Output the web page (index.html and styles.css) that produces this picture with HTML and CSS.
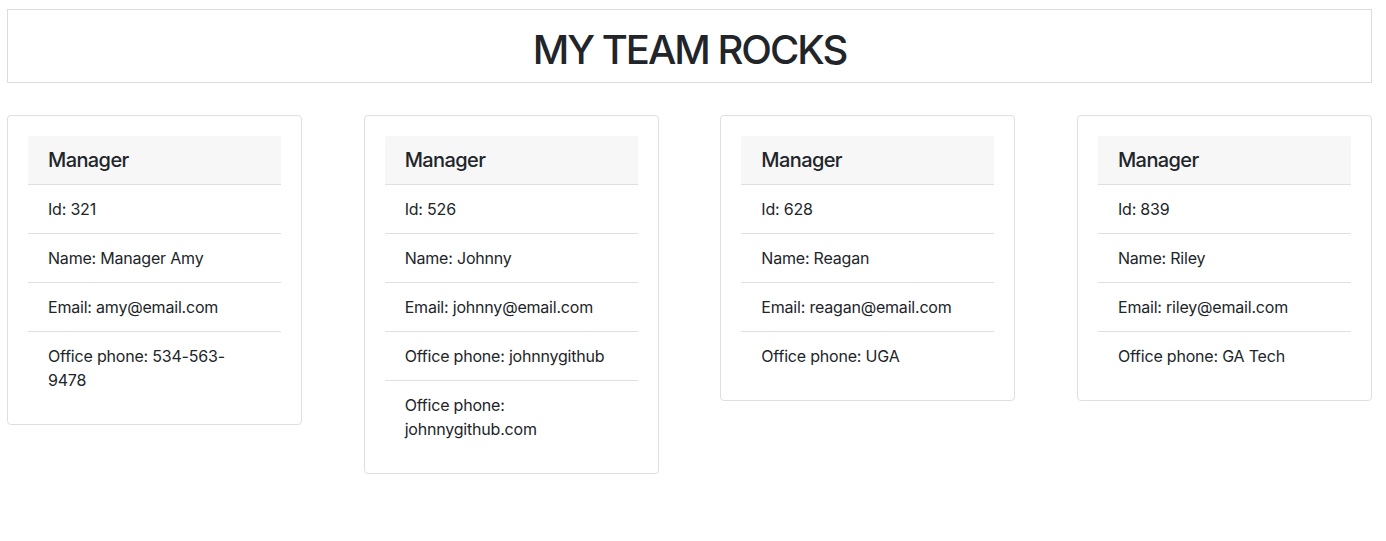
FILE: index.html
```html
<!DOCTYPE html>
<html lang="en">
<head>
<meta charset="utf-8">
<title>My Team</title>
<link rel="stylesheet" href="styles.css">
</head>
<body>
<header class="banner">
  <h1 class="banner-title">MY TEAM ROCKS</h1>
</header>
<main class="team">
  <div class="card">
    <div class="card-body">
      <div class="card-header">Manager</div>
      <ul class="list">
        <li class="list-item">Id: 321</li>
        <li class="list-item">Name: Manager Amy</li>
        <li class="list-item">Email: amy@email.com</li>
        <li class="list-item">Office phone: 534-563-9478</li>
      </ul>
    </div>
  </div>
  <div class="card">
    <div class="card-body">
      <div class="card-header">Manager</div>
      <ul class="list">
        <li class="list-item">Id: 526</li>
        <li class="list-item">Name: Johnny</li>
        <li class="list-item">Email: johnny@email.com</li>
        <li class="list-item">Office phone: johnnygithub</li>
        <li class="list-item">Office phone: johnnygithub.com</li>
      </ul>
    </div>
  </div>
  <div class="card">
    <div class="card-body">
      <div class="card-header">Manager</div>
      <ul class="list">
        <li class="list-item">Id: 628</li>
        <li class="list-item">Name: Reagan</li>
        <li class="list-item">Email: reagan@email.com</li>
        <li class="list-item">Office phone: UGA</li>
      </ul>
    </div>
  </div>
  <div class="card">
    <div class="card-body">
      <div class="card-header">Manager</div>
      <ul class="list">
        <li class="list-item">Id: 839</li>
        <li class="list-item">Name: Riley</li>
        <li class="list-item">Email: riley@email.com</li>
        <li class="list-item">Office phone: GA Tech</li>
      </ul>
    </div>
  </div>
</main>
</body>
</html>
```
FILE: styles.css
```css
* { box-sizing: border-box; }

body {
  margin: 0;
  padding: 9px 14px 0 7px;
  font-family: Inter, "Liberation Sans", sans-serif;
  font-size: 16px;
  line-height: 1.5;
  color: #212529;
  background: #fff;
}

.banner {
  border: 1px solid #dcdcdc;
  padding: 16px 0 8px;
  text-align: center;
}

.banner-title {
  margin: 0;
  font-size: 40px;
  font-weight: 500;
  line-height: 1.2;
  letter-spacing: -2px;
}

.team {
  display: flex;
  justify-content: space-between;
  align-items: flex-start;
  margin-top: 32px;
}

.card {
  width: 295px;
  border: 1px solid #dfdfdf;
  border-radius: 4px;
  background: #fff;
}

.card-body {
  padding: 20px;
}

.card-header {
  padding: 12px 20px;
  font-size: 20px;
  font-weight: 500;
  line-height: 1.2;
  background: #f7f7f7;
  border-bottom: 1px solid #dfdfdf;
  border-radius: 3px 3px 0 0;
  letter-spacing: -0.6px;
}

.list {
  list-style: none;
  margin: 0;
  padding: 0;
}

.list-item {
  padding: 12px 20px;
  border-bottom: 1px solid #dfdfdf;
  letter-spacing: -0.2px;
}

.list-item:last-child {
  border-bottom: none;
}
```
